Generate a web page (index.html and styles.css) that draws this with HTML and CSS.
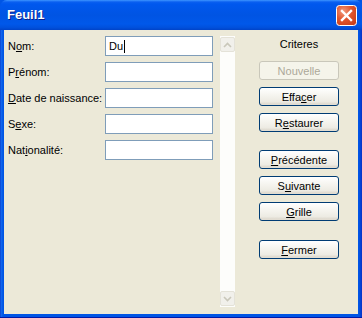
FILE: index.html
```html
<!DOCTYPE html>
<html lang="fr">
<head>
    <meta charset="UTF-8">
    <title>Feuil1</title>
    <link rel="stylesheet" href="styles.css">
</head>
<body>
<div class="window">
    <div class="titlebar">
        <span class="title">Feuil1</span>
        <button class="close" title="Fermer">
            <svg width="21" height="21" viewBox="0 0 21 21">
                <defs>
                    <radialGradient id="closeFill" cx="0.35" cy="0.3" r="0.9">
                        <stop offset="0" stop-color="#F29B7E"/>
                        <stop offset="0.45" stop-color="#E0552E"/>
                        <stop offset="1" stop-color="#C53A14"/>
                    </radialGradient>
                </defs>
                <rect x="0.5" y="0.5" width="20" height="20" rx="3" fill="url(#closeFill)" stroke="#FFFFFF"/>
                <path d="M6 6 L15 15 M15 6 L6 15" stroke="#FFFFFF" stroke-width="2.4" stroke-linecap="square"/>
            </svg>
        </button>
    </div>

    <div class="frame">
        <div class="client">
            <!-- champs de la fiche -->
            <div class="fields">
                <label class="field-label">N<u>o</u>m:</label>
                <div class="field-box">Du<span class="caret"></span></div>

                <label class="field-label">P<u>r</u>énom:</label>
                <div class="field-box"></div>

                <label class="field-label"><u>D</u>ate de naissance:</label>
                <div class="field-box"></div>

                <label class="field-label">S<u>e</u>xe:</label>
                <div class="field-box"></div>

                <label class="field-label">Nat<u>i</u>onalité:</label>
                <div class="field-box"></div>
            </div>

            <div class="scrollbar">
                <div class="scroll-btn">
                    <svg width="9" height="6" viewBox="0 0 9 6"><path d="M1 5 L4.5 1.5 L8 5" fill="none" stroke="#C9C7BA" stroke-width="1.6"/></svg>
                </div>
                <div class="scroll-track"></div>
                <div class="scroll-btn">
                    <svg width="9" height="6" viewBox="0 0 9 6"><path d="M1 1 L4.5 4.5 L8 1" fill="none" stroke="#C9C7BA" stroke-width="1.6"/></svg>
                </div>
            </div>

            <!-- boutons -->
            <div class="actions">
                <div class="criteres">Criteres</div>
                <button class="xp-button" disabled>Nouvelle</button>
                <button class="xp-button">Effa<u>c</u>er</button>
                <button class="xp-button">R<u>e</u>staurer</button>
                <button class="xp-button group-start"><u>P</u>récédente</button>
                <button class="xp-button">S<u>u</u>ivante</button>
                <button class="xp-button"><u>G</u>rille</button>
                <button class="xp-button group-end"><u>F</u>ermer</button>
            </div>
        </div>
    </div>
</div>
</body>
</html>
```

FILE: styles.css
```css
/* couleurs Windows XP (Luna) */
:root {
    --xp-face: #ECE9D8;
    --xp-blue: #0055E5;
    --xp-blue-dark: #0831C4;
    --xp-edit-border: #7F9DB9;
    --xp-button-border: #003C74;
    --xp-disabled-text: #ACA899;
}

body {
    margin: 0;
    padding: 0;
    font-family: 'Liberation Sans', Arial, sans-serif;
    font-size: 11px;
    color: #000;
}

.window {
    width: 362px;
    height: 318px;
    display: flex;
    flex-direction: column;
    background-color: var(--xp-blue);
}

.titlebar {
    height: 30px;
    flex: none;
    display: flex;
    align-items: center;
    justify-content: space-between;
    padding: 0 5px 0 7px;
    box-sizing: border-box;
    border-radius: 7px 7px 0 0;
    background: linear-gradient(to bottom,
        #3D95FF 0, #0A5FF0 2px, #0058EE 4px, #0054E3 50%,
        #0058EA 80%, #0050DC 92%, #0043C8 100%);
}

.title {
    color: #fff;
    font-weight: bold;
    font-size: 13px;
    text-shadow: 1px 1px 0 #0A1E8A;
    margin-top: -1px;
}

.close {
    width: 21px;
    height: 21px;
    padding: 0;
    margin: 0;
    border: none;
    background: none;
    display: block;
}

.close svg {
    display: block;
}

.frame {
    flex: 1;
    padding: 0 4px 4px 4px;
    background: linear-gradient(to right, #0831C4 0, #166AEE 1px, #0055E5 3px, #0055E5 calc(100% - 3px), #0831C4 100%);
    box-shadow: inset 0 -1px 0 #0019A8;
    display: flex;
}

.client {
    flex: 1;
    background-color: var(--xp-face);
    display: flex;
    align-items: flex-start;
    padding: 6px 0 0 4px;
}

.fields {
    display: grid;
    grid-template-columns: 97px 108px;
    grid-auto-rows: 20px;
    row-gap: 6px;
}

.field-label {
    align-self: center;
    line-height: 14px;
}

.field-box {
    border: 1px solid var(--xp-edit-border);
    background-color: #fff;
    padding: 0 3px;
    line-height: 18px;
    display: flex;
    align-items: center;
}

.caret {
    display: inline-block;
    width: 1px;
    height: 13px;
    background-color: #000;
    margin-left: 1px;
}

.scrollbar {
    margin-left: 7px;
    width: 15px;
    height: 271px;
    display: flex;
    flex-direction: column;
    background-color: #FDFDFB;
}

.scroll-btn {
    height: 15px;
    box-sizing: border-box;
    margin: 1px 0;
    border: 1px solid #E4E2D8;
    border-radius: 2px;
    background-color: #F1F0EB;
    display: flex;
    align-items: center;
    justify-content: center;
}

.scroll-track {
    flex: 1;
}

.actions {
    margin-left: 24px;
    width: 80px;
    display: flex;
    flex-direction: column;
}

.criteres {
    text-align: center;
    line-height: 16px;
    margin-bottom: 9px;
}

.xp-button {
    height: 19px;
    margin: 0 0 7px 0;
    padding: 0;
    font-family: 'Liberation Sans', Arial, sans-serif;
    font-size: 11px;
    color: #000;
    border: 1px solid var(--xp-button-border);
    border-radius: 3px;
    background: linear-gradient(to bottom, #FFFFFF 0, #F6F5F0 40%, #EDEBE3 80%, #D8D2C6 100%);
    box-shadow: inset 0 -1px 0 #E2DDD2;
}

.xp-button:disabled {
    color: var(--xp-disabled-text);
    border-color: #C9C7BA;
    background: #F5F4EA;
    box-shadow: none;
}

.group-start {
    margin-top: 11px;
}

.group-end {
    margin-top: 12px;
}
```
